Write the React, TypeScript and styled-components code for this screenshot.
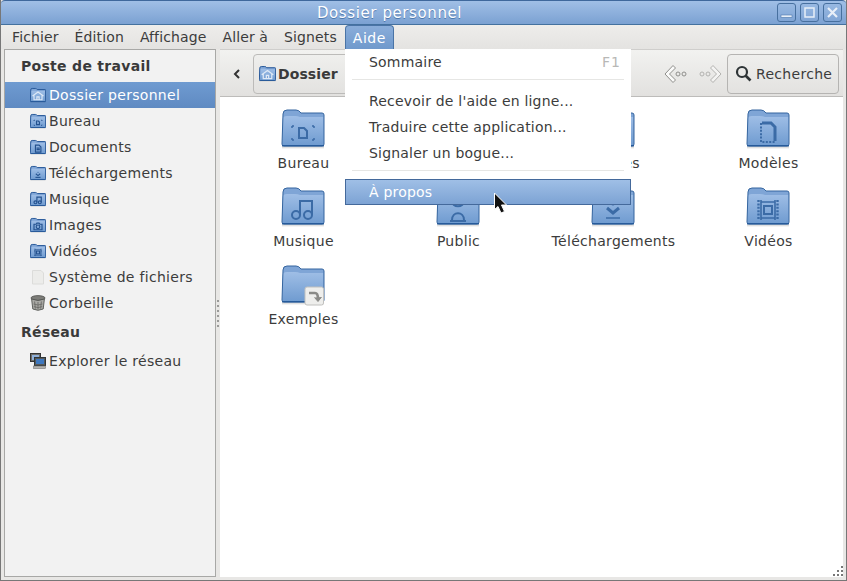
import React from 'react';
import styled, { createGlobalStyle } from 'styled-components';

const GlobalStyle = createGlobalStyle`
  html, body { margin: 0; padding: 0; height: 100%; overflow: hidden; }
  body { font-family: "DejaVu Sans", sans-serif; font-size: 14px; letter-spacing: 0.3px; color: #3a3a3a; }
  #root { height: 100%; }
`;

type FolderKind = 'home' | 'desktop' | 'docs' | 'down' | 'music' | 'images' | 'video' | 'public' | 'templates' | 'link';

const Glyph = ({ kind, small }: { kind: FolderKind; small?: boolean }) => {
  const c = small ? '#24528f' : '#3b6ba6';
  const w = small ? 3.2 : 2;
  switch (kind) {
    case 'home':
      return <path d="M7 25 L22 14 L37 25 M11 23 V35 H33 V23 M19 35 V27 H25 V35" fill="none" stroke={small ? '#dfe9f6' : c} strokeWidth={w} />;
    case 'desktop':
      return (
        <g fill="none" stroke={c} strokeWidth={small ? 3 : 1.5}>
          <path d="M18 22 h5 l3 3 v7 h-8 z" strokeWidth={w} />
          <path d="M11 20 h2 M11 20 v2 M33 20 h-2 M33 20 v2 M11 34 h2 M11 34 v-2 M33 34 h-2 M33 34 v-2" />
        </g>
      );
    case 'docs':
      return <path d="M15 17 h10 l5 5 v14 h-15 z M18 25 h9 M18 29 h9" fill="none" stroke={c} strokeWidth={w} />;
    case 'down':
      return (
        <g fill="none" stroke={c} strokeWidth="3">
          <circle cx="22" cy="20" r="1.6" fill={c} stroke="none" />
          <path d="M16 24 L22 29 L28 24" />
          <path d="M15 34 H29" strokeWidth={small ? 3 : 1.5} />
        </g>
      );
    case 'music':
      return (
        <g fill="none" stroke={c} strokeWidth={w}>
          <circle cx="15" cy="31" r="4" />
          <circle cx="27" cy="31" r="4" />
          <path d="M19 31 V17 H31 V31" />
        </g>
      );
    case 'images':
      return (
        <g fill="none" stroke={c} strokeWidth={w}>
          <path d="M11 20 h6 l2 -3 h6 l2 3 h6 v15 h-22 z" />
          <circle cx="22" cy="27" r="5" />
        </g>
      );
    case 'video':
      return (
        <g fill="none" stroke={c}>
          <path d="M15 16 V36 M29 16 V36" strokeWidth="1.6" />
          <path d="M12.5 16 V36 M31.5 16 V36" strokeWidth="2.4" strokeDasharray="2 1.4" />
          <path d="M15 18 H29 M15 34 H29" strokeWidth="1.6" />
          <rect x="18" y="22" width="8" height="8" strokeWidth={w} />
        </g>
      );
    case 'public':
      return <path d="M16 17 C16 24 28 24 28 17 M16 36 C16 27 28 27 28 36 M14 37 H30" fill="none" stroke={c} strokeWidth={w} />;
    case 'templates':
      return (
        <g fill="none" stroke={c}>
          <path d="M16 17 H25 L29 21 V35" strokeWidth="3" />
          <path d="M15 17 V36 H30" strokeWidth="2" strokeDasharray="2 1.4" />
        </g>
      );
    default:
      return null;
  }
};

const FolderIcon = ({ kind, size }: { kind: FolderKind; size: number }) => (
  <svg width={size} height={size} viewBox="0 0 44 44" style={{ display: 'block' }}>
    <defs>
      <linearGradient id="fold" x1="0" y1="0" x2="0" y2="1">
        <stop offset="0" stopColor="#9fbee6" />
        <stop offset="1" stopColor="#6f9bd0" />
      </linearGradient>
    </defs>
    <rect x="1" y="40" width="42" height="2.4" fill="#000" opacity="0.12" />
    <path d="M2 8 Q2 4 6 4 H15 Q18 4 20 7 H41 Q43 7 43 9 V38 Q43 40 41 40 H3 Q1 40 1 38 Z" fill="#7fa5d6" />
    <path d="M1.6 13 Q2 10 6 10 H14 Q17 10 19 11 H42.4 V38 Q42.4 39.6 41 39.6 H3 Q1.6 39.6 1.6 38 Z" fill="url(#fold)" />
    <path d="M2 8 Q2 4 6 4 H15 Q18 4 20 7 H41 Q43 7 43 9 V38 Q43 40 41 40 H3 Q1 40 1 38 Z" fill="none" stroke={size < 20 ? '#2a5a9a' : '#35659f'} strokeWidth="1" vectorEffect="non-scaling-stroke" />
    <rect x="1" y="39" width="42" height="1.4" fill="#265a9a" />
    <Glyph kind={kind} small={size < 20} />
    {kind === 'link' && (
      <g>
        <rect x="24" y="25" width="18.5" height="18" rx="2" fill="#eeeeec" stroke="#c0c0be" />
        <path d="M28 31 H34 Q37 31 37 37" fill="none" stroke="#8a8a87" strokeWidth="2.6" />
        <path d="M33.5 35.5 L37 39.5 L40.5 35" fill="#8a8a87" stroke="#8a8a87" strokeWidth="1" />
      </g>
    )}
  </svg>
);

const DriveIcon = () => (
  <svg width="16" height="16" viewBox="0 0 16 16" style={{ display: 'block' }}>
    <path d="M2.5 1.5 H11 L13.5 4 V15 H2.5 Z" fill="#ececea" stroke="#dcdcda" />
  </svg>
);

const TrashIcon = () => (
  <svg width="16" height="16" viewBox="0 0 16 16" style={{ display: 'block' }}>
    <ellipse cx="8" cy="3" rx="7" ry="2.4" fill="#7d7d79" stroke="#4f4f4c" strokeWidth="0.8" />
    <path d="M1.6 4 Q8 7 14.4 4 L13.2 14 Q8 16.6 2.8 14 Z" fill="#a9a9a5" stroke="#555753" strokeWidth="0.9" />
    <path d="M4.6 6.5 L5.4 13.6 M8 7 V14.4 M11.4 6.5 L10.6 13.6 M3.6 9 Q8 11 12.4 9 M3.8 11.6 Q8 13.6 12.2 11.6" stroke="#6c6c69" strokeWidth="0.9" fill="none" />
  </svg>
);

const NetworkIcon = () => (
  <svg width="16" height="16" viewBox="0 0 16 16" style={{ display: 'block' }}>
    <rect x="0.5" y="0.5" width="10" height="8" fill="#6d6d6a" stroke="#333" />
    <rect x="2" y="2" width="7" height="5" fill="#8fb0da" />
    <rect x="4.5" y="4.5" width="11" height="8" fill="#55595a" stroke="#2e3436" />
    <rect x="6" y="6" width="8" height="5" fill="#3e78bf" />
    <rect x="3.5" y="13" width="12" height="2.5" fill="#b4b4b0" stroke="#777" strokeWidth="0.6" />
  </svg>
);

const Arrow = ({ flip, faded }: { flip?: boolean; faded?: boolean }) => (
  <svg width="24" height="20" viewBox="0 0 24 20" style={{ display: 'block', transform: flip ? 'scaleX(-1)' : undefined, opacity: faded ? 0.6 : 1 }}>
    <path d="M9 1.5 L1 10 L9 18.5 L11.5 16 L5.5 10 L11.5 4 Z" fill="#fbfbfa" stroke="#8f8f8c" />
    <circle cx="14" cy="10" r="2" fill="none" stroke="#8f8f8c" />
    <circle cx="20" cy="10" r="2" fill="none" stroke="#8f8f8c" />
  </svg>
);

const Window = styled.div`
  height: 581px;
  box-sizing: border-box;
  position: relative;
  display: flex;
  flex-direction: column;
  background: #e8e7e5;
  border-left: 1px solid #777;
  border-right: 1px solid #777;
  border-bottom: 1px solid #777;
  overflow: hidden;
`;

const TitleBar = styled.div`
  height: 25px;
  flex: none;
  box-sizing: border-box;
  display: flex;
  align-items: center;
  justify-content: flex-end;
  padding: 0 4px 1px 0;
  gap: 4px;
  position: relative;
  background: linear-gradient(#a0bfe6, #7ba1d2);
  border-top: 1px solid #3f689c;
  border-bottom: 1px solid #44719f;
  border-radius: 4px 4px 0 0;
`;

const Title = styled.div`
  position: absolute;
  inset: 0 68px 0 0;
  display: flex;
  align-items: center;
  justify-content: center;
  color: #fff;
  font-size: 15px;
  letter-spacing: 0.6px;
  text-shadow: 0 1px 0 #4d78ad;
`;

const WinButton = styled.div`
  width: 17px;
  height: 17px;
  border: 1px solid #47709f;
  border-radius: 3px;
  background: linear-gradient(#98b9e2, #80a5d5);
  display: flex;
  align-items: center;
  justify-content: center;
  z-index: 1;
`;

const MenuBar = styled.div`
  height: 24px;
  flex: none;
  display: flex;
  padding-left: 3px;
  letter-spacing: 0.12px;
  background: linear-gradient(#eeedeb, #e4e3e1);
`;

const MenuItem = styled.div<{ $open?: boolean }>`
  padding: 0 8px;
  line-height: 24px;
  color: ${p => (p.$open ? '#fff' : '#3c3c3c')};
  box-sizing: border-box;
  ${p => p.$open && `
    background: linear-gradient(#8aadda, #6f99cc);
    border: 1px solid #4a74a6;
    border-bottom: none;
    border-radius: 4px 4px 0 0;
    padding: 0 7px;
    letter-spacing: 0.5px;
  `}
`;

const Body = styled.div`
  flex: 1;
  min-height: 0;
  display: flex;
  padding: 0 3px 3px;
`;

const Sidebar = styled.div`
  width: 212px;
  flex: none;
  box-sizing: border-box;
  background: #f2f2f2;
  border: 1px solid #a8a8a6;
  padding-top: 3px;
`;

const Heading = styled.div<{ $top?: number; $bottom?: number }>`
  font-weight: bold;
  height: 26px;
  line-height: 26px;
  padding-left: 16px;
  margin-top: ${p => p.$top ?? 0}px;
  margin-bottom: ${p => p.$bottom ?? 0}px;
  color: #3a3a3a;
`;

const Place = styled.div<{ $active?: boolean }>`
  height: 26px;
  display: flex;
  align-items: center;
  gap: 3px;
  padding-left: 25px;
  color: ${p => (p.$active ? '#fff' : '#3c3c3c')};
  background: ${p => (p.$active ? 'linear-gradient(#6f9bd1, #5f8ac2)' : 'none')};
`;

const Grip = styled.div`
  width: 4px;
  flex: none;
  display: flex;
  flex-direction: column;
  justify-content: center;
  align-items: center;
  gap: 3px;
  & i { width: 2px; height: 2px; background: #9a9a98; display: block; }
`;

const Main = styled.div`
  flex: 1;
  min-width: 0;
  display: flex;
  flex-direction: column;
  background: #fff;
`;

const Toolbar = styled.div`
  height: 48px;
  flex: none;
  box-sizing: border-box;
  display: flex;
  align-items: center;
  padding: 1px 4px 0 0;
  background: linear-gradient(#f2f2f0, #e2e1df);
  border-top: 1px solid #cfcecc;
  border-bottom: 1px solid #bdbcba;
`;

const Back = styled.div`
  width: 33px;
  display: flex;
  justify-content: center;
`;

const PathButton = styled.div`
  width: 250px;
  height: 40px;
  box-sizing: border-box;
  display: flex;
  align-items: center;
  gap: 2px;
  padding-left: 5px;
  font-weight: bold;
  letter-spacing: 0.1px;
  border: 1px solid #bcbbb9;
  border-radius: 4px;
  background: linear-gradient(#efefed, #e3e2e0);
`;

const NavArrows = styled.div`
  margin-left: auto;
  display: flex;
  gap: 10px;
  margin-right: 5px;
`;

const SearchButton = styled.div`
  width: 112px;
  height: 40px;
  box-sizing: border-box;
  display: flex;
  align-items: center;
  gap: 4px;
  padding-left: 7px;
  color: #3c3c3c;
  border: 1px solid #b5b4b2;
  border-radius: 4px;
  background: linear-gradient(#efefed, #e3e2e0);
`;

const Files = styled.div`
  display: grid;
  grid-template-columns: repeat(4, 155px);
  grid-auto-rows: 78px;
  padding: 9px 0 0 5px;
`;

const FileItem = styled.div`
  display: flex;
  flex-direction: column;
  align-items: center;
  gap: 5px;
  color: #3c3c3c;
`;

const FileName = styled.span`
  padding-left: 2px;
`;

const Menu = styled.div`
  position: absolute;
  left: 344px;
  top: 49px;
  width: 286px;
  height: 156px;
  box-sizing: border-box;
  background: #fff;
  display: flex;
  flex-direction: column;
`;

const Entry = styled.div<{ $active?: boolean }>`
  height: 26px;
  flex: none;
  box-sizing: border-box;
  display: flex;
  align-items: center;
  justify-content: space-between;
  padding: 0 10px 0 24px;
  letter-spacing: 0.2px;
  color: ${p => (p.$active ? '#fff' : '#3c3c3c')};
  ${p => p.$active && `
    background: linear-gradient(#9fbfe6, #7da3d4);
    border: 1px solid #44699b;
    padding-left: 23px;
  `}
`;

const Shortcut = styled.span`
  color: #b8b8b6;
  letter-spacing: 1px;
`;

const Separator = styled.div<{ $top: number; $bottom: number }>`
  height: 1px;
  flex: none;
  margin: ${p => p.$top}px 7px ${p => p.$bottom}px;
  background: #e6e6e4;
`;

const Pointer = styled.svg`
  position: absolute;
  left: 492px;
  top: 192px;
`;

const Resize = styled.svg`
  position: absolute;
  right: 3px;
  bottom: 3px;
`;

const places: [string, FolderKind][] = [
  ['Dossier personnel', 'home'],
  ['Bureau', 'desktop'],
  ['Documents', 'docs'],
  ['Téléchargements', 'down'],
  ['Musique', 'music'],
  ['Images', 'images'],
  ['Vidéos', 'video'],
];

const files: [string, FolderKind][] = [
  ['Bureau', 'desktop'],
  ['Documents', 'docs'],
  ['Images', 'images'],
  ['Modèles', 'templates'],
  ['Musique', 'music'],
  ['Public', 'public'],
  ['Téléchargements', 'down'],
  ['Vidéos', 'video'],
  ['Exemples', 'link'],
];

export default function App() {
  return (
    <>
      <GlobalStyle />
      <Window>
        <TitleBar>
          <Title>Dossier personnel</Title>
          <WinButton>
            <svg width="13" height="13" viewBox="0 0 13 13"><rect x="1" y="9" width="11" height="2.4" fill="#e8eff8" stroke="#4d78ad" strokeWidth="0.6" /></svg>
          </WinButton>
          <WinButton>
            <svg width="13" height="13" viewBox="0 0 13 13"><rect x="2" y="2" width="9" height="9" fill="none" stroke="#e8eff8" strokeWidth="1.5" /></svg>
          </WinButton>
          <WinButton>
            <svg width="13" height="13" viewBox="0 0 13 13"><path d="M2 2 L11 11 M11 2 L2 11" stroke="#e8eff8" strokeWidth="2.2" /></svg>
          </WinButton>
        </TitleBar>
        <MenuBar>
          <MenuItem>Fichier</MenuItem>
          <MenuItem>Édition</MenuItem>
          <MenuItem>Affichage</MenuItem>
          <MenuItem>Aller à</MenuItem>
          <MenuItem>Signets</MenuItem>
          <MenuItem $open>Aide</MenuItem>
        </MenuBar>
        <Body>
          <Sidebar>
            <Heading $bottom={3}>Poste de travail</Heading>
            {places.map(([name, kind], i) => (
              <Place key={name} $active={i === 0}>
                <FolderIcon kind={kind} size={16} />
                {name}
              </Place>
            ))}
            <Place><DriveIcon />Système de fichiers</Place>
            <Place><TrashIcon />Corbeille</Place>
            <Heading $top={3} $bottom={3}>Réseau</Heading>
            <Place><NetworkIcon />Explorer le réseau</Place>
          </Sidebar>
          <Grip><i /><i /><i /><i /><i /><i /></Grip>
          <Main>
            <Toolbar>
              <Back>
                <svg width="10" height="12" viewBox="0 0 10 12"><path d="M7 2 L3 6 L7 10" fill="none" stroke="#333" strokeWidth="2" /></svg>
              </Back>
              <PathButton>
                <FolderIcon kind="home" size={17} />
                Dossier
              </PathButton>
              <NavArrows>
                <Arrow />
                <Arrow flip faded />
              </NavArrows>
              <SearchButton>
                <svg width="17" height="17" viewBox="0 0 17 17">
                  <circle cx="7" cy="7" r="5" fill="none" stroke="#2e3436" strokeWidth="2.2" />
                  <path d="M10.5 10.5 L15.5 15.5" stroke="#2e3436" strokeWidth="2.6" />
                </svg>
                Recherche
              </SearchButton>
            </Toolbar>
            <Files>
              {files.map(([name, kind]) => (
                <FileItem key={name}>
                  <FolderIcon kind={kind} size={44} />
                  <FileName>{name}</FileName>
                </FileItem>
              ))}
            </Files>
          </Main>
        </Body>
        <Menu>
          <Entry>Sommaire<Shortcut>F1</Shortcut></Entry>
          <Separator $top={4} $bottom={8} />
          <Entry>Recevoir de l'aide en ligne...</Entry>
          <Entry>Traduire cette application...</Entry>
          <Entry>Signaler un bogue...</Entry>
          <Separator $top={4} $bottom={8} />
          <Entry $active>À propos</Entry>
        </Menu>
        <Pointer width="18" height="24" viewBox="0 0 18 24">
          <path d="M1.5 1 V17.5 L5 14.5 L8 21 L11.5 19.5 L8.5 13 H13.5 Z" fill="#111" stroke="#fff" strokeWidth="1" />
        </Pointer>
        <Resize width="12" height="12" viewBox="0 0 12 12">
          <path d="M10 1 h2 v2 h-2 z M6 5 h2 v2 h-2 z M10 5 h2 v2 h-2 z M2 9 h2 v2 h-2 z M6 9 h2 v2 h-2 z M10 9 h2 v2 h-2 z" fill="#777" />
        </Resize>
      </Window>
    </>
  );
}
